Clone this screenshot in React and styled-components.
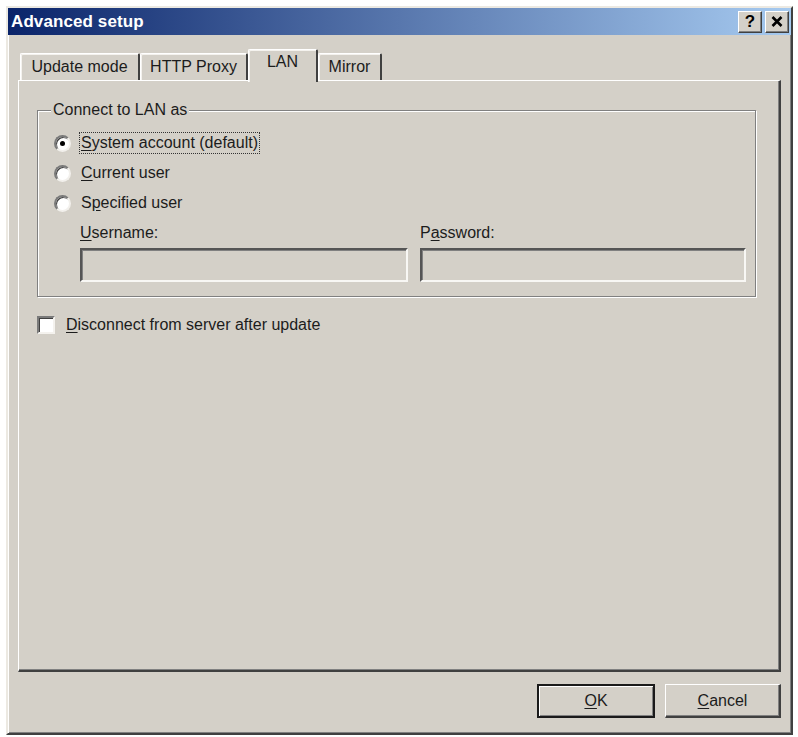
import React from "react";
import styled, { createGlobalStyle, css } from "styled-components";

const Global = createGlobalStyle`
  html, body { margin: 0; padding: 0; background: #ffffff; }
  body { font-family: "Liberation Sans", Arial, sans-serif; }
  * { box-sizing: border-box; }
`;

const FACE = "#d4d0c8";

const raised = css`
  border: 1px solid;
  border-color: #ffffff #404040 #404040 #ffffff;
  box-shadow: inset -1px -1px 0 #808080, inset 1px 1px 0 ${FACE};
`;

const Window = styled.div`
  margin: 6px 0 0 6px;
  width: 787px;
  height: 729px;
  background: ${FACE};
  border: 2px solid;
  border-color: #ece9e2 #404040 #404040 #ece9e2;
  box-shadow: inset 1px 1px 0 #ffffff, inset -1px -1px 0 #808080;
  display: flex;
  flex-direction: column;
  font-family: "Liberation Sans", Arial, sans-serif;
  font-size: 16px;
  color: #1c1c1c;
`;

const TitleBar = styled.div`
  height: 27px;
  flex: none;
  display: flex;
  align-items: center;
  justify-content: space-between;
  padding: 0 2px 0 3px;
  background: linear-gradient(90deg, #0a246a 0%, #a6caf0 100%);
  color: #ffffff;
`;

const Title = styled.span`
  font-weight: bold;
  font-size: 17px;
  letter-spacing: 0.1px;
`;

const CaptionButtons = styled.div`
  display: flex;
  gap: 3px;
`;

const CaptionButton = styled.div`
  width: 24px;
  height: 22px;
  background: ${FACE};
  ${raised};
  display: flex;
  align-items: center;
  justify-content: center;
  color: #000;
  font-weight: bold;
  font-size: 17px;
  line-height: 1;
`;

const Body = styled.div`
  flex: 1;
  display: flex;
  flex-direction: column;
  padding: 14px 10px 0 10px;
`;

const TabRow = styled.div`
  display: flex;
  align-items: flex-end;
  height: 31px;
  padding-left: 2px;
  position: relative;
  z-index: 1;
`;

const Tab = styled.div`
  width: ${(p) => p.$w}px;
  height: ${(p) => (p.$active ? 33 : 27)}px;
  margin-bottom: ${(p) => (p.$active ? -2 : 0)}px;
  padding-bottom: ${(p) => (p.$active ? 8 : 0)}px;
  display: flex;
  align-items: center;
  justify-content: center;
  background: ${FACE};
  border-top: 1px solid #ffffff;
  border-left: 1px solid #ffffff;
  border-right: 2px solid #404040;
  border-top-left-radius: 2px;
  border-top-right-radius: 2px;
  box-shadow: inset 1px 1px 0 #f4f2ee;
  font-size: 16px;
  white-space: nowrap;
`;

const Panel = styled.div`
  height: 592px;
  flex: none;
  border: 1px solid;
  border-color: #ffffff #404040 #404040 #ffffff;
  border-bottom-width: 2px;
  border-right-width: 2px;
  box-shadow: inset -1px -1px 0 #808080;
  padding: 20px 23px 0 18px;
  display: flex;
  flex-direction: column;
`;

const GroupBox = styled.fieldset`
  margin: 0;
  padding: 9px 8px 14px 8px;
  border: 1px solid #808080;
  box-shadow: 1px 1px 0 #ffffff, inset 1px 1px 0 #ffffff;
  min-width: 0;
`;

const Legend = styled.legend`
  margin-left: 5px;
  padding: 0 2px;
  background: ${FACE};
  line-height: 18px;
`;

const GroupContent = styled.div`
  display: flex;
  flex-direction: column;
  padding-left: 34px;
`;

const RadioRow = styled.label`
  display: flex;
  align-items: center;
  height: 30px;
  margin-left: -26px;
  gap: 8px;
`;

const RadioCircle = styled.span`
  width: 17px;
  height: 17px;
  flex: none;
  border-radius: 50%;
  background: #ffffff;
  border: 2px solid;
  border-color: #7a7a7a #f2f0ec #f2f0ec #7a7a7a;
  box-shadow: inset 1px 1px 0 #404040;
  display: flex;
  align-items: center;
  justify-content: center;
  &::after {
    content: "";
    width: 5px;
    height: 5px;
    border-radius: 50%;
    background: ${(p) => (p.$checked ? "#000" : "transparent")};
  }
`;

const LabelText = styled.span`
  padding: 1px 1px;
  border: 1px ${(p) => (p.$focus ? "dotted #333" : "solid transparent")};
`;

const Key = styled.u`
  text-decoration: underline;
  text-underline-offset: 2px;
`;

const FieldGrid = styled.div`
  display: grid;
  grid-template-columns: 328px 326px;
  column-gap: 12px;
  margin-top: 6px;
`;

const Field = styled.div`
  display: flex;
  flex-direction: column;
  gap: 6px;
`;

const FieldLabel = styled.span`
  line-height: 18px;
`;

const TextBox = styled.div`
  height: 34px;
  background: ${FACE};
  border: 2px solid;
  border-color: #555555 #f8f7f4 #f8f7f4 #555555;
  box-shadow: inset 1px 1px 0 #808080;
`;

const CheckRow = styled.label`
  display: flex;
  align-items: center;
  gap: 11px;
  margin-top: 19px;
  height: 18px;
`;

const CheckBox = styled.span`
  width: 18px;
  height: 18px;
  flex: none;
  background: #ffffff;
  border: 2px solid;
  border-color: #7a7a7a #f4f2ee #f4f2ee #7a7a7a;
  box-shadow: inset 1px 1px 0 #404040;
`;

const ButtonRow = styled.div`
  display: flex;
  justify-content: flex-end;
  gap: 10px;
  margin-top: 12px;
`;

const Button = styled.div`
  width: ${(p) => p.$w}px;
  height: 34px;
  display: flex;
  align-items: center;
  justify-content: center;
  background: ${FACE};
  font-size: 16px;
  ${(p) =>
    p.$default
      ? css`
          border: 2px solid #1a1a1a;
          box-shadow: inset 1px 1px 0 #ffffff, inset -1px -1px 0 #808080;
        `
      : css`
          border: 1px solid;
          border-color: #ffffff #404040 #404040 #ffffff;
          border-width: 1px 2px 2px 1px;
          box-shadow: inset -1px -1px 0 #808080;
        `}
`;

export default function App() {
  return (
    <>
      <Global />
      <Window>
        <TitleBar>
          <Title>Advanced setup</Title>
          <CaptionButtons>
            <CaptionButton>?</CaptionButton>
            <CaptionButton>
              <svg width="12" height="11" viewBox="0 0 12 11">
                <path d="M1.5 1 L10.5 10 M10.5 1 L1.5 10" stroke="#000" strokeWidth="2.6" />
              </svg>
            </CaptionButton>
          </CaptionButtons>
        </TitleBar>
        <Body>
          <TabRow>
            <Tab $w={120}>Update mode</Tab>
            <Tab $w={108}>HTTP Proxy</Tab>
            <Tab $w={70} $active>LAN</Tab>
            <Tab $w={64}>Mirror</Tab>
          </TabRow>
          <Panel>
            <GroupBox>
              <Legend>Connect to LAN as</Legend>
              <GroupContent>
                <RadioRow>
                  <RadioCircle $checked />
                  <LabelText $focus>
                    <Key>S</Key>ystem account (default)
                  </LabelText>
                </RadioRow>
                <RadioRow>
                  <RadioCircle />
                  <LabelText>
                    <Key>C</Key>urrent user
                  </LabelText>
                </RadioRow>
                <RadioRow>
                  <RadioCircle />
                  <LabelText>
                    S<Key>p</Key>ecified user
                  </LabelText>
                </RadioRow>
                <FieldGrid>
                  <Field>
                    <FieldLabel>
                      <Key>U</Key>sername:
                    </FieldLabel>
                    <TextBox />
                  </Field>
                  <Field>
                    <FieldLabel>
                      P<Key>a</Key>ssword:
                    </FieldLabel>
                    <TextBox />
                  </Field>
                </FieldGrid>
              </GroupContent>
            </GroupBox>
            <CheckRow>
              <CheckBox />
              <span>
                <Key>D</Key>isconnect from server after update
              </span>
            </CheckRow>
          </Panel>
          <ButtonRow>
            <Button $w={118} $default>
              <Key>O</Key>K
            </Button>
            <Button $w={116}>
              <Key>C</Key>ancel
            </Button>
          </ButtonRow>
        </Body>
      </Window>
    </>
  );
}
